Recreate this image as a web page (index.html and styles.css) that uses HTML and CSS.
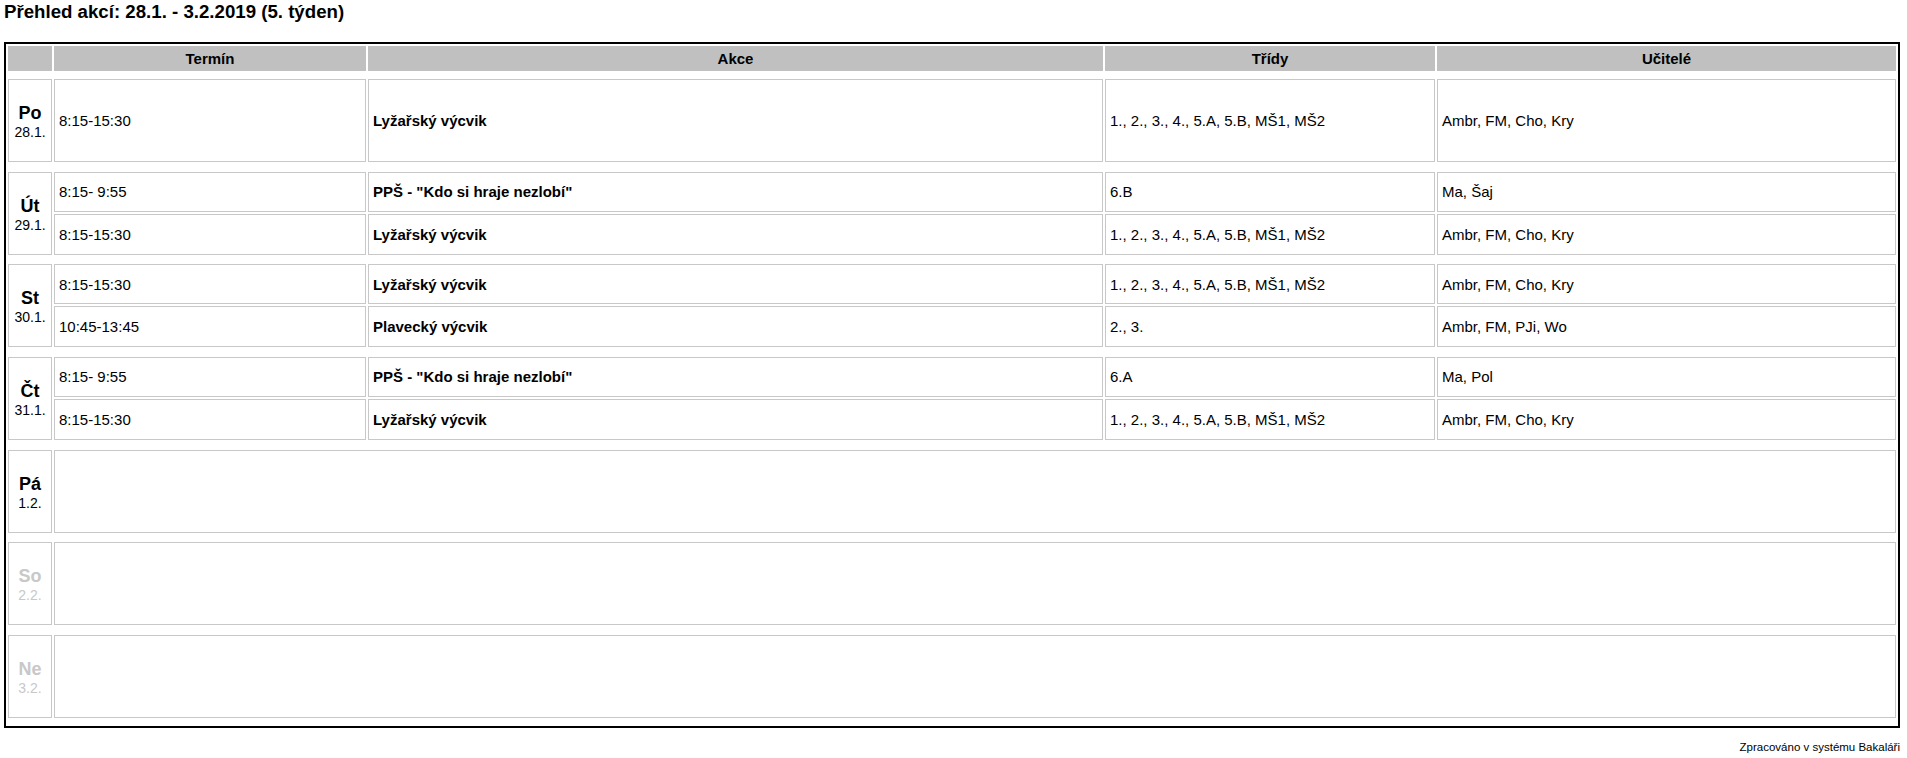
FILE: index.html
```html
<!DOCTYPE html>
<html lang="cs">
<head>
<meta charset="utf-8">
<title>Přehled akcí</title>
<link rel="stylesheet" href="styles.css">
</head>
<body>
<div class="page">
  <h1 class="title">Přehled akcí: 28.1. - 3.2.2019 (5. týden)</h1>
  <table class="plan">
    <colgroup>
      <col class="c-day">
      <col class="c-time">
      <col class="c-event">
      <col class="c-class">
      <col class="c-teach">
    </colgroup>
    <thead>
      <tr class="head">
        <th></th>
        <th>Termín</th>
        <th>Akce</th>
        <th>Třídy</th>
        <th>Učitelé</th>
      </tr>
    </thead>
    <tbody>
      <tr class="gap first"><td colspan="5"></td></tr>

      <tr class="one">
        <td class="day"><b>Po</b><span>28.1.</span></td>
        <td>8:15-15:30</td>
        <td class="ev">Lyžařský výcvik</td>
        <td>1., 2., 3., 4., 5.A, 5.B, MŠ1, MŠ2</td>
        <td>Ambr, FM, Cho, Kry</td>
      </tr>
      <tr class="gap"><td colspan="5"></td></tr>

      <tr class="sub1">
        <td class="day" rowspan="2"><b>Út</b><span>29.1.</span></td>
        <td>8:15- 9:55</td>
        <td class="ev">PPŠ - "Kdo si hraje nezlobí"</td>
        <td>6.B</td>
        <td>Ma, Šaj</td>
      </tr>
      <tr class="sub2">
        <td>8:15-15:30</td>
        <td class="ev">Lyžařský výcvik</td>
        <td>1., 2., 3., 4., 5.A, 5.B, MŠ1, MŠ2</td>
        <td>Ambr, FM, Cho, Kry</td>
      </tr>
      <tr class="gap"><td colspan="5"></td></tr>

      <tr class="sub1">
        <td class="day" rowspan="2"><b>St</b><span>30.1.</span></td>
        <td>8:15-15:30</td>
        <td class="ev">Lyžařský výcvik</td>
        <td>1., 2., 3., 4., 5.A, 5.B, MŠ1, MŠ2</td>
        <td>Ambr, FM, Cho, Kry</td>
      </tr>
      <tr class="sub2">
        <td>10:45-13:45</td>
        <td class="ev">Plavecký výcvik</td>
        <td>2., 3.</td>
        <td>Ambr, FM, PJi, Wo</td>
      </tr>
      <tr class="gap"><td colspan="5"></td></tr>

      <tr class="sub1">
        <td class="day" rowspan="2"><b>Čt</b><span>31.1.</span></td>
        <td>8:15- 9:55</td>
        <td class="ev">PPŠ - "Kdo si hraje nezlobí"</td>
        <td>6.A</td>
        <td>Ma, Pol</td>
      </tr>
      <tr class="sub2">
        <td>8:15-15:30</td>
        <td class="ev">Lyžařský výcvik</td>
        <td>1., 2., 3., 4., 5.A, 5.B, MŠ1, MŠ2</td>
        <td>Ambr, FM, Cho, Kry</td>
      </tr>
      <tr class="gap"><td colspan="5"></td></tr>

      <tr class="one">
        <td class="day"><b>Pá</b><span>1.2.</span></td>
        <td colspan="4"></td>
      </tr>
      <tr class="gap"><td colspan="5"></td></tr>

      <tr class="one">
        <td class="day weekend"><b>So</b><span>2.2.</span></td>
        <td colspan="4"></td>
      </tr>
      <tr class="gap"><td colspan="5"></td></tr>

      <tr class="one">
        <td class="day weekend"><b>Ne</b><span>3.2.</span></td>
        <td colspan="4"></td>
      </tr>
      <tr class="gap last"><td colspan="5"></td></tr>
    </tbody>
  </table>
  <div class="footer">Zpracováno v systému Bakaláři</div>
</div>
</body>
</html>
```

FILE: styles.css
```css
html, body {
  margin: 0;
  padding: 0;
  background: #fff;
}

body {
  font-family: "Liberation Sans", Arial, sans-serif;
  color: #000;
}

.page {
  width: 1896px;
  padding: 1px 0 0 4px;
}

.title {
  margin: 0;
  font-size: 18.67px;
  line-height: 21px;
  font-weight: bold;
}

.plan {
  margin-top: 20px;
  width: 1896px;
  table-layout: fixed;
  border-collapse: separate;
  border-spacing: 2px;
  border: 2px solid #000;
  font-size: 15px;
}

.c-day { width: 44px; }
.c-time { width: 312px; }
.c-event { width: 735px; }
.c-class { width: 330px; }
.c-teach { width: 459px; }

.plan th,
.plan td {
  box-sizing: border-box;
  padding: 0 4px;
  vertical-align: middle;
  text-align: left;
  white-space: nowrap;
}

.plan tbody td {
  border: 1px solid #c8c8c8;
}

.plan .head {
  height: 25px;
}

.plan th {
  background: #c0c0c0;
  font-weight: bold;
  text-align: center;
  border: 1px solid #c0c0c0;
}

.plan tr.gap {
  height: 5.67px;
}

.plan tr.gap.first,
.plan tr.gap.last {
  height: 4px;
}

.plan tr.gap td {
  border: 0;
  padding: 0;
  height: auto;
}

.plan tr.one {
  height: 83px;
}

.plan tr.sub1 {
  height: 40px;
}

.plan tr.sub2 {
  height: 41px;
}

.plan td.ev {
  font-weight: bold;
}

.plan td.day {
  text-align: center;
  padding: 2px 0 0;
}

.day b {
  display: block;
  font-size: 18px;
  line-height: 21px;
}

.day span {
  display: block;
  font-size: 14px;
  line-height: 16px;
}

.day.weekend {
  color: #c8c8c8;
}

.footer {
  margin-top: 13px;
  text-align: right;
  font-size: 11.5px;
  line-height: 13px;
}
```
